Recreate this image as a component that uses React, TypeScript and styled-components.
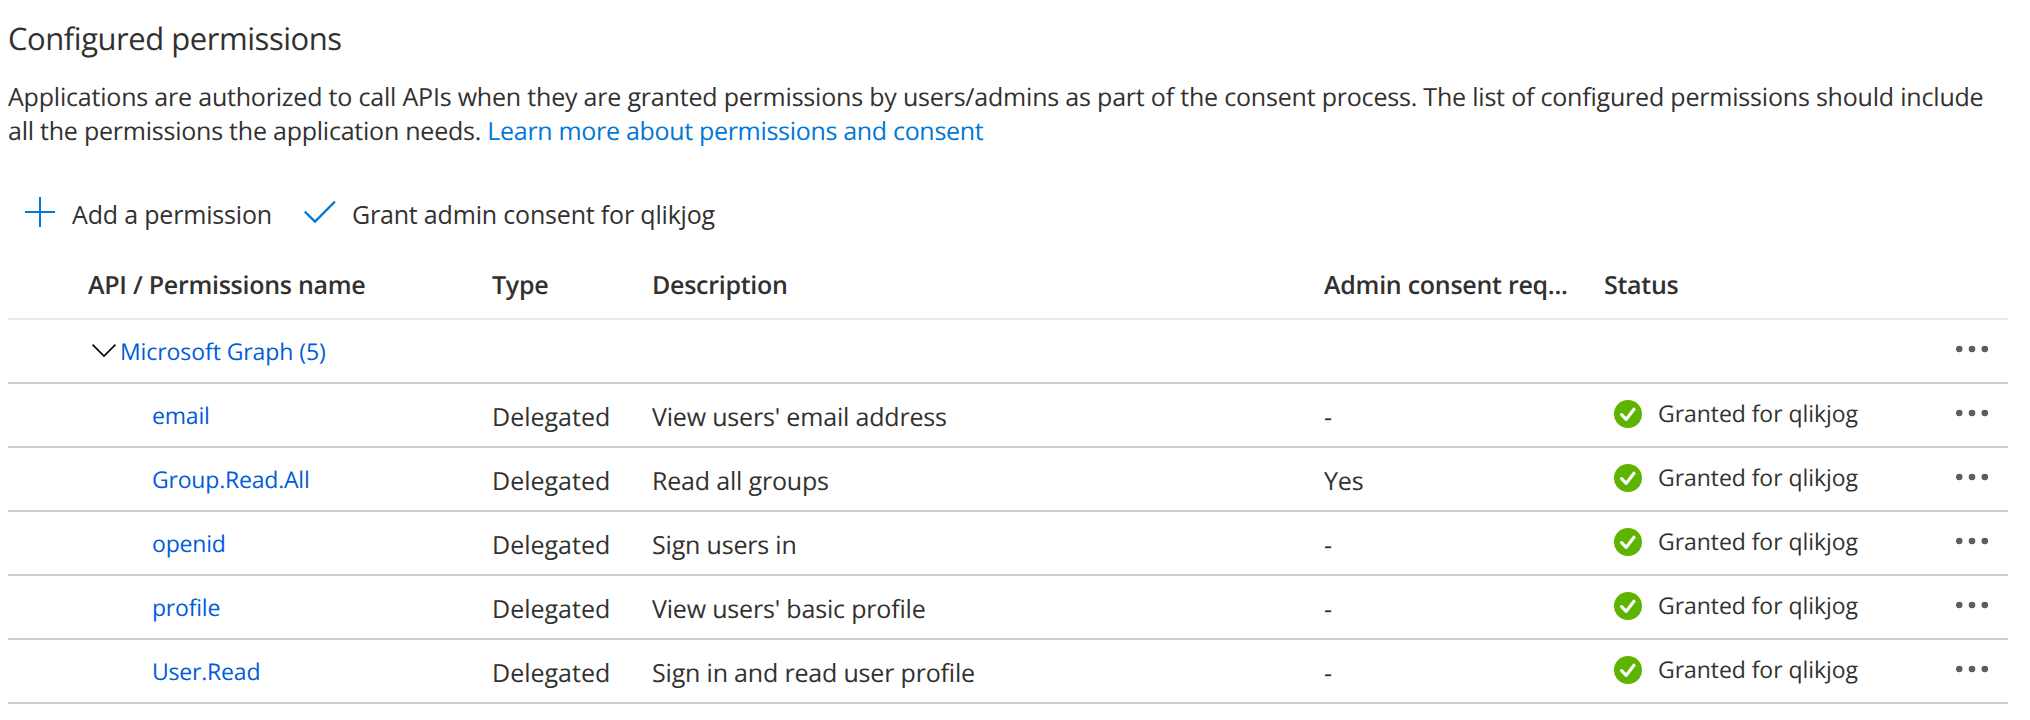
import React from 'react';
import styled, { createGlobalStyle } from 'styled-components';

const GlobalStyle = createGlobalStyle`
  * { box-sizing: border-box; }
  body {
    margin: 0;
    background: #fff;
    color: #323130;
    font-family: 'Open Sans', 'Noto Sans', sans-serif;
    font-size: 25px;
    text-rendering: geometricPrecision;
  }
`;

const Page = styled.main`
  width: 2030px;
  height: 720px;
  padding: 19px 22px 0 8px;
  overflow: hidden;
`;

const Title = styled.h1`
  margin: 0 0 21px;
  font-size: 31px;
  font-weight: 400;
  line-height: 40px;
  letter-spacing: -0.46px;
`;

const Intro = styled.p`
  margin: 0;
  line-height: 34px;
  letter-spacing: -0.197px;
  white-space: nowrap;
`;

const IntroLine = styled.span<{ $tracking: number }>`
  display: block;
  letter-spacing: ${(p) => p.$tracking}px;
`;

const DocLink = styled.a`
  color: #0078d4;
  letter-spacing: -0.31px;
  text-decoration: none;
`;

const Toolbar = styled.div`
  display: flex;
  gap: 32px;
  margin-top: 49px;
  padding-left: 17px;
`;

const Command = styled.button<{ $gap: number }>`
  display: flex;
  gap: ${(p) => p.$gap}px;
  padding: 0;
  border: 0;
  background: none;
  color: inherit;
  font: inherit;
  line-height: 34px;
  letter-spacing: -0.18px;
  white-space: nowrap;
`;

const Table = styled.div`
  margin-top: 25px;
`;

const Row = styled.div`
  display: grid;
  grid-template-columns: 484px 160px 672px 280px 352px 52px;
  height: 64px;
  border-bottom: 2px solid #ccc;
`;

const HeaderRow = styled(Row)`
  padding-bottom: 5px;
  border-color: #eaeaea;
  font-weight: 600;
  letter-spacing: -0.27px;
`;

const Cell = styled.div`
  display: flex;
  align-items: center;
  min-width: 0;
  white-space: nowrap;
`;

const NameHeader = styled(Cell)`
  padding-left: 80px;
`;

const TextCell = styled(Cell)<{ $tracking?: number }>`
  padding-top: 4px;
  letter-spacing: ${(p) => p.$tracking ?? -0.18}px;
`;

const NameCell = styled(Cell)<{ $indent: number; $tracking?: number }>`
  gap: 4px;
  padding-left: ${(p) => p.$indent}px;
  font-size: 23px;
  letter-spacing: ${(p) => p.$tracking ?? -0.2}px;
`;

const NameLink = styled.a`
  color: #015cda;
  text-decoration: none;
`;

const StatusCell = styled(Cell)`
  gap: 16px;
  padding: 0 0 4px 10px;
  font-size: 23px;
  letter-spacing: -0.06px;

  svg { margin-top: 2px; }
`;

const MenuCell = styled(Cell)`
  grid-column: 6;
  padding-bottom: 4px;
`;

const PlusIcon = () => (
  <svg width="30" height="30" viewBox="0 0 30 30" fill="none" stroke="#0078d4" strokeWidth="2">
    <path d="M15 0v30M0 15h30" />
  </svg>
);

const CheckIcon = () => (
  <svg width="32" height="30" viewBox="0 0 32 30" fill="none" stroke="#0078d4" strokeWidth="2.2">
    <path d="M.8 14.6 11 24.6 30.9 4.6" />
  </svg>
);

const ChevronIcon = () => (
  <svg width="24" height="14" viewBox="0 0 24 14" fill="none" stroke="#000" strokeWidth="1.6">
    <path d="M.6 .6 12 12 23.4 .6" />
  </svg>
);

const GrantedIcon = () => (
  <svg width="28" height="28" viewBox="0 0 28 28" fill="none">
    <circle cx="14" cy="14" r="14" fill="#5db300" />
    <path d="m7.6 14.6 4.6 4.8L20 9.2" stroke="#fff" strokeWidth="3.2" strokeLinecap="round" strokeLinejoin="round" />
  </svg>
);

const MoreIcon = () => (
  <svg width="34" height="8" viewBox="0 0 34 8" fill="#605e5c">
    <circle cx="3.2" cy="4" r="3.3" />
    <circle cx="16" cy="4" r="3.3" />
    <circle cx="28.8" cy="4" r="3.3" />
  </svg>
);

const permissions = [
  { name: 'email', description: "View users' email address", consent: '-' },
  { name: 'Group.Read.All', description: 'Read all groups', consent: 'Yes' },
  { name: 'openid', description: 'Sign users in', consent: '-' },
  { name: 'profile', description: "View users' basic profile", consent: '-' },
  { name: 'User.Read', description: 'Sign in and read user profile', consent: '-' },
];

export default function App() {
  return (
    <Page>
      <GlobalStyle />
      <Title>Configured permissions</Title>
      <Intro>
        <IntroLine $tracking={-0.197}>
          Applications are authorized to call APIs when they are granted permissions by users/admins as part of the
          consent process. The list of configured permissions should include
        </IntroLine>
        <IntroLine $tracking={-0.23}>
          all the permissions the application needs. <DocLink>Learn more about permissions and consent</DocLink>
        </IntroLine>
      </Intro>
      <Toolbar>
        <Command $gap={17}>
          <PlusIcon />
          Add a permission
        </Command>
        <Command $gap={16}>
          <CheckIcon />
          Grant admin consent for qlikjog
        </Command>
      </Toolbar>
      <Table>
        <HeaderRow>
          <NameHeader>API / Permissions name</NameHeader>
          <Cell>Type</Cell>
          <Cell>Description</Cell>
          <Cell>Admin consent req...</Cell>
          <Cell>Status</Cell>
        </HeaderRow>
        <Row>
          <NameCell $indent={84} $tracking={-0.08}>
            <ChevronIcon />
            <NameLink>Microsoft Graph (5)</NameLink>
          </NameCell>
          <MenuCell>
            <MoreIcon />
          </MenuCell>
        </Row>
        {permissions.map((p) => (
          <Row key={p.name}>
            <NameCell $indent={144}>
              <NameLink>{p.name}</NameLink>
            </NameCell>
            <TextCell $tracking={0}>Delegated</TextCell>
            <TextCell>{p.description}</TextCell>
            <TextCell>{p.consent}</TextCell>
            <StatusCell>
              <GrantedIcon />
              Granted for qlikjog
            </StatusCell>
            <MenuCell>
              <MoreIcon />
            </MenuCell>
          </Row>
        ))}
      </Table>
    </Page>
  );
}
